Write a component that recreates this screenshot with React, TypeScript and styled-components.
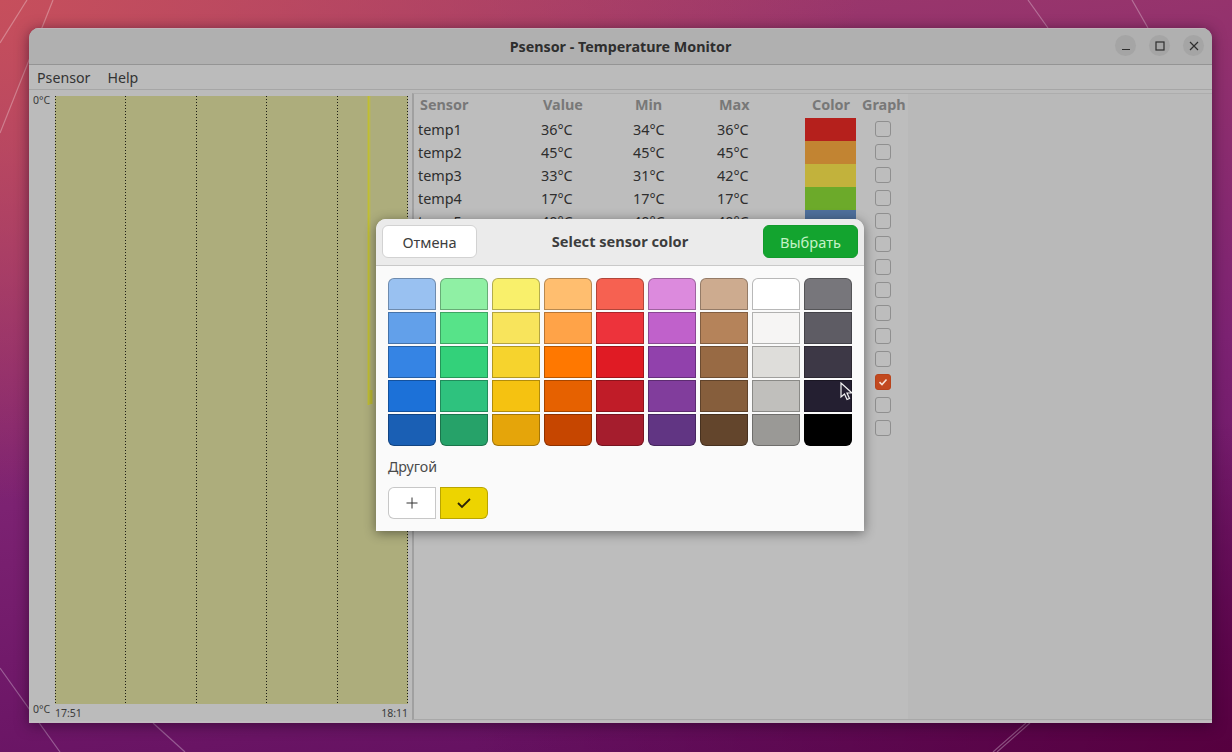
import { createGlobalStyle, styled } from 'styled-components';

const GlobalStyle = createGlobalStyle`
  html, body, #root {
    margin: 0;
    height: 100%;
  }
  body {
    overflow: hidden;
    font-family: 'Noto Sans', 'Open Sans', sans-serif;
  }
`;

// rows 6 and up sit behind the dialog, their readings can't be seen
const sensors = [
  { name: 'temp1', value: '36°C', min: '34°C', max: '36°C', color: '#b5201c' },
  { name: 'temp2', value: '45°C', min: '45°C', max: '45°C', color: '#c28432' },
  { name: 'temp3', value: '33°C', min: '31°C', max: '42°C', color: '#c2b23c' },
  { name: 'temp4', value: '17°C', min: '17°C', max: '17°C', color: '#6caa2a' },
  { name: 'temp5', value: '40°C', min: '40°C', max: '40°C', color: '#4f709c' },
  { name: 'temp6', color: '#7a5a8c' },
  { name: 'temp7', color: '#a03a3a' },
  { name: 'temp8', color: '#a87a30' },
  { name: 'temp9', color: '#a8a040' },
  { name: 'temp10', color: '#5a9a30' },
  { name: 'temp11', color: '#4a6a90' },
  { name: 'temp12', color: '#d8c800', checked: true },
  { name: 'temp13', color: '#804a80' },
  { name: 'temp14', color: '#903030' },
];

const palette = [
  ['#99c1f1', '#8ff0a4', '#f9f06b', '#ffbe6f', '#f66151', '#dc8add', '#cdab8f', '#ffffff', '#77767b'],
  ['#62a0ea', '#57e389', '#f8e45c', '#ffa348', '#ed333b', '#c061cb', '#b5835a', '#f6f5f4', '#5e5c64'],
  ['#3584e4', '#33d17a', '#f6d32d', '#ff7800', '#e01b24', '#9141ac', '#986a44', '#deddda', '#3d3846'],
  ['#1c71d8', '#2ec27e', '#f5c211', '#e66100', '#c01c28', '#813d9c', '#865e3c', '#c0bfbc', '#241f31'],
  ['#1a5fb4', '#26a269', '#e5a50a', '#c64600', '#a51d2d', '#613583', '#63452c', '#9a9996', '#000000'],
];

const Desktop = styled.div`
  position: relative;
  box-sizing: border-box;
  width: 1232px;
  height: 752px;
  padding: 28px 20px 29px 29px;
  display: flex;
  overflow: hidden;
  background:
    radial-gradient(760px 330px at 1232px 752px, #56003f 0%, rgba(86, 0, 63, 0) 100%),
    radial-gradient(860px 500px at 0 0, #c64f5c 0%, rgba(198, 79, 92, 0) 100%),
    linear-gradient(172deg, #a23c6a 0%, #7c2272 55%, #5e0c5c 100%);
`;

const Wallpaper = styled.svg`
  position: absolute;
  inset: 0;
`;

const Window = styled.div`
  position: relative;
  flex: 1;
  display: flex;
  flex-direction: column;
  background: #bbbbbb;
  border-radius: 10px 10px 0 0;
  box-shadow:
    0 2px 14px rgba(30, 0, 30, 0.55),
    inset 0 -2px 0 #c2bcc0;
  overflow: hidden;
`;

const TitleBar = styled.header`
  flex: none;
  position: relative;
  height: 36px;
  display: flex;
  align-items: center;
  justify-content: center;
  background: #b0b0b0;
  border-bottom: 1px solid #949494;
  box-shadow: inset 0 1px 0 #c0b4ba;
`;

const Title = styled.h1`
  margin: 0;
  font-size: 14.3px;
  font-weight: 700;
  color: #2e2e2e;
`;

const WindowButtons = styled.div`
  position: absolute;
  top: 7px;
  right: 8px;
  display: flex;
  gap: 13px;
`;

const WindowButton = styled.button`
  width: 21px;
  height: 21px;
  padding: 0;
  border: none;
  border-radius: 50%;
  background: #a5a5a5;
  color: #2e2e2e;
  display: flex;
  align-items: center;
  justify-content: center;
`;

const MenuBar = styled.nav`
  flex: none;
  height: 24px;
  display: flex;
  align-items: center;
  gap: 17px;
  padding-left: 8px;
  background: #bbbbbb;
  border-bottom: 1px solid #a6a6a6;
`;

const MenuItem = styled.span`
  font-size: 14.2px;
  color: #333333;
`;

const Content = styled.main`
  flex: 1;
  min-height: 0;
  display: flex;
`;

const GraphPanel = styled.section`
  flex: none;
  width: 379px;
  padding-top: 6px;
  display: grid;
  grid-template-columns: 26px 353px;
  grid-template-rows: 608px auto;
`;

const AxisColumn = styled.div`
  grid-row: 1 / 3;
  display: flex;
  flex-direction: column;
  justify-content: space-between;
  margin-top: -2px;
  padding-left: 4px;
  height: 621px;
`;

const AxisLabel = styled.span`
  font-size: 10.5px;
  line-height: 12px;
  color: #3a3a3a;
`;

const TimeRow = styled.div`
  display: flex;
  justify-content: space-between;
  padding-top: 3px;
`;

const SensorPanel = styled.section`
  flex: 1;
  margin: 3px 0 3px 4px;
  border-left: 2px solid #a0a0a0;
  border-top: 1px solid #adadad;
  border-bottom: 1px solid #a8a8a8;
  background: #b9b9b9;
  box-sizing: border-box;
`;

const SensorTable = styled.div`
  width: 494px;
  height: 100%;
  background: #bdbdbd;
`;

const Row = styled.div`
  display: grid;
  grid-template-columns: 123px 92px 84px 88px 57px 46px;
  height: 23px;
  align-items: center;
  padding-left: 4px;
`;

const HeadRow = styled(Row)`
  grid-template-columns: 123px 92px 84px 93px 50px 46px;
  box-sizing: border-box;
  height: 24px;
  padding: 0 0 4px 6px;
`;

const HeadCell = styled.span`
  font-size: 14.4px;
  font-weight: 700;
  color: #787878;
`;

const Cell = styled.span`
  font-size: 14.4px;
  color: #2e2e2e;
`;

const Swatch = styled.span<{ $color: string }>`
  display: block;
  width: 51px;
  height: 23px;
  background: ${(p) => p.$color};
`;

const CheckBox = styled.span<{ $checked?: boolean }>`
  box-sizing: border-box;
  width: 16px;
  height: 16px;
  margin: 0 0 2px 13px;
  border-radius: 3px;
  border: 1px solid ${(p) => (p.$checked ? '#b8431c' : '#8f8f8f')};
  background: ${(p) => (p.$checked ? '#c2491f' : 'transparent')};
  display: flex;
  align-items: center;
  justify-content: center;
`;

const DialogLayer = styled.div`
  position: absolute;
  inset: 0;
  padding: 0 1px 1px 0;
  display: flex;
  align-items: center;
  justify-content: center;
`;

const Dialog = styled.div`
  width: 488px;
  height: 312px;
  display: flex;
  flex-direction: column;
  border-radius: 10px 10px 0 0;
  background: #fafafa;
  box-shadow: 0 2px 12px rgba(0, 0, 0, 0.45);
  overflow: hidden;
`;

const DialogHeader = styled.div`
  flex: none;
  height: 47px;
  box-sizing: border-box;
  padding: 6px;
  display: flex;
  align-items: flex-start;
  justify-content: space-between;
  background: #ebebeb;
  border-bottom: 1px solid #c9c9c9;
`;

const DialogTitle = styled.h2`
  margin: 0;
  line-height: 33px;
  font-size: 14.6px;
  font-weight: 700;
  color: #3d3d3d;
`;

const CancelButton = styled.button`
  width: 95px;
  height: 33px;
  padding: 0;
  border: 1px solid #d2d2d2;
  border-radius: 6px;
  background: #ffffff;
  font: 14.6px 'Noto Sans', sans-serif;
  color: #3d3d3d;
`;

const SelectButton = styled(CancelButton)`
  border-color: #129a2c;
  background: #13a42f;
  color: #c4f2c6;
`;

const DialogBody = styled.div`
  flex: 1;
  padding: 12px 12px 0;
`;

const ColorGrid = styled.div`
  display: grid;
  grid-template-columns: repeat(9, 48px);
  grid-auto-rows: 32px;
  gap: 2px 4px;
`;

const ColorCell = styled.span<{ $color: string; $row: number }>`
  box-sizing: border-box;
  background: ${(p) => p.$color};
  border: 1px solid rgba(0, 0, 0, 0.28);
  border-radius: ${(p) => (p.$row === 0 ? '6px 6px 0 0' : p.$row === 4 ? '0 0 6px 6px' : '0')};
`;

const OtherLabel = styled.div`
  margin-top: 11px;
  font-size: 14.2px;
  line-height: 20px;
  color: #4a4a4a;
`;

const CustomRow = styled.div`
  margin-top: 10px;
  display: flex;
  gap: 4px;
`;

const CustomCell = styled.span<{ $color: string; $side: 'left' | 'right' }>`
  box-sizing: border-box;
  width: 48px;
  height: 32px;
  display: flex;
  align-items: center;
  justify-content: center;
  background: ${(p) => p.$color};
  border: 1px solid rgba(0, 0, 0, 0.22);
  border-radius: ${(p) => (p.$side === 'left' ? '6px 0 0 6px' : '0 6px 6px 0')};
`;

const Cursor = styled.svg`
  position: absolute;
  left: 811px;
  top: 354px;
`;

const gridLines = [0.5, 70.5, 141.5, 211.5, 282.5, 352.5];

const Graph = () => (
  <svg width="353" height="608" style={{ display: 'block' }}>
    <rect width="353" height="608" fill="#adad7c" />
    {gridLines.map((x) => (
      <line key={x} x1={x} y1="0" x2={x} y2="608" stroke="#1c1c14" strokeWidth="1" strokeDasharray="1 2" />
    ))}
    <line x1="314" y1="0" x2="314" y2="309" stroke="#c4c238" strokeOpacity="0.5" strokeWidth="3" />
    <line x1="313.5" y1="0" x2="313.5" y2="309" stroke="#c0be30" strokeWidth="1.5" />
    <line x1="316" y1="294" x2="316" y2="308" stroke="#b8b632" strokeWidth="3" />
  </svg>
);

export default function App() {
  return (
    <>
      <GlobalStyle />
      <Desktop>
        <Wallpaper width="1232" height="752" fill="none" stroke="#ffffff" strokeOpacity="0.3" strokeWidth="1.2">
          <path d="M0 43 L27 0" />
          <path d="M0 133 L53 0" />
          <path d="M1028 0 L1048 28" />
          <path d="M1132 0 L1148 28" />
          <path d="M0 668 L60 752" />
          <path d="M153 723 L185 752" />
          <path d="M1030 723 L997 752" />
          <path d="M1026 723 L993 752" />
        </Wallpaper>
        <Window>
          <TitleBar>
            <Title>Psensor - Temperature Monitor</Title>
            <WindowButtons>
              <WindowButton aria-label="Minimize">
                <svg width="10" height="10" viewBox="0 0 10 10">
                  <path d="M1 8.5H9" stroke="currentColor" strokeWidth="1.2" />
                </svg>
              </WindowButton>
              <WindowButton aria-label="Maximize">
                <svg width="10" height="10" viewBox="0 0 10 10" fill="none">
                  <rect x="1" y="1" width="8" height="8" stroke="currentColor" strokeWidth="1.2" />
                </svg>
              </WindowButton>
              <WindowButton aria-label="Close">
                <svg width="10" height="10" viewBox="0 0 10 10">
                  <path d="M1 1L9 9M9 1L1 9" stroke="currentColor" strokeWidth="1.2" />
                </svg>
              </WindowButton>
            </WindowButtons>
          </TitleBar>
          <MenuBar>
            <MenuItem>Psensor</MenuItem>
            <MenuItem>Help</MenuItem>
          </MenuBar>
          <Content>
            <GraphPanel>
              <AxisColumn>
                <AxisLabel>0°C</AxisLabel>
                <AxisLabel>0°C</AxisLabel>
              </AxisColumn>
              <Graph />
              <TimeRow>
                <AxisLabel>17:51</AxisLabel>
                <AxisLabel>18:11</AxisLabel>
              </TimeRow>
            </GraphPanel>
            <SensorPanel>
              <SensorTable>
                <HeadRow>
                  <HeadCell>Sensor</HeadCell>
                  <HeadCell>Value</HeadCell>
                  <HeadCell>Min</HeadCell>
                  <HeadCell>Max</HeadCell>
                  <HeadCell>Color</HeadCell>
                  <HeadCell>Graph</HeadCell>
                </HeadRow>
                {sensors.map((s) => (
                  <Row key={s.name}>
                    <Cell>{s.name}</Cell>
                    <Cell>{s.value}</Cell>
                    <Cell>{s.min}</Cell>
                    <Cell>{s.max}</Cell>
                    <Swatch $color={s.color} />
                    <CheckBox $checked={s.checked}>
                      {s.checked && (
                        <svg width="12" height="12" viewBox="0 0 12 12" fill="none">
                          <path d="M2.5 6.2L5 8.5L9.5 3.5" stroke="#f5e3d8" strokeWidth="1.6" />
                        </svg>
                      )}
                    </CheckBox>
                  </Row>
                ))}
              </SensorTable>
            </SensorPanel>
          </Content>
          <DialogLayer>
            <Dialog>
              <DialogHeader>
                <CancelButton>Отмена</CancelButton>
                <DialogTitle>Select sensor color</DialogTitle>
                <SelectButton>Выбрать</SelectButton>
              </DialogHeader>
              <DialogBody>
                <ColorGrid>
                  {palette.map((row, r) =>
                    row.map((color) => <ColorCell key={color} $color={color} $row={r} />),
                  )}
                </ColorGrid>
                <OtherLabel>Другой</OtherLabel>
                <CustomRow>
                  <CustomCell $color="#ffffff" $side="left">
                    <svg width="12" height="12" viewBox="0 0 12 12">
                      <path d="M6 0.5V11.5M0.5 6H11.5" stroke="#333333" strokeWidth="1" />
                    </svg>
                  </CustomCell>
                  <CustomCell $color="#edd400" $side="right">
                    <svg width="16" height="12" viewBox="0 0 16 12" fill="none">
                      <path d="M2 6L6 10L14 2" stroke="#2b2408" strokeWidth="1.8" />
                    </svg>
                  </CustomCell>
                </CustomRow>
              </DialogBody>
            </Dialog>
          </DialogLayer>
          <Cursor width="14" height="20" viewBox="0 0 14 20">
            <path d="M1 1V15L4.5 12L7 17.5L9.5 16.5L7 11H12Z" fill="#241f31" stroke="#f2f2f2" strokeWidth="1.2" />
          </Cursor>
        </Window>
      </Desktop>
    </>
  );
}
